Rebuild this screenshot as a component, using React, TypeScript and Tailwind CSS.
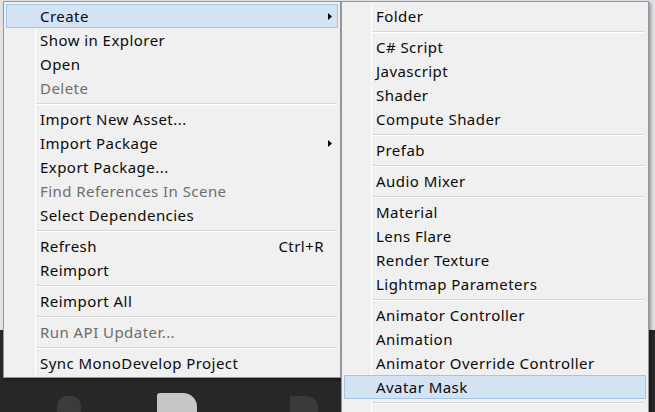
import React from 'react';

type Entry =
  | { label: string; disabled?: boolean; arrow?: boolean; shortcut?: string; active?: boolean }
  | 'sep';

const mainItems: Entry[] = [
  { label: 'Create', arrow: true, active: true },
  { label: 'Show in Explorer' },
  { label: 'Open' },
  { label: 'Delete', disabled: true },
  'sep',
  { label: 'Import New Asset...' },
  { label: 'Import Package', arrow: true },
  { label: 'Export Package...' },
  { label: 'Find References In Scene', disabled: true },
  { label: 'Select Dependencies' },
  'sep',
  { label: 'Refresh', shortcut: 'Ctrl+R' },
  { label: 'Reimport' },
  'sep',
  { label: 'Reimport All' },
  'sep',
  { label: 'Run API Updater...', disabled: true },
  'sep',
  { label: 'Sync MonoDevelop Project' },
];

const createItems: Entry[] = [
  { label: 'Folder' },
  'sep',
  { label: 'C# Script' },
  { label: 'Javascript' },
  { label: 'Shader' },
  { label: 'Compute Shader' },
  'sep',
  { label: 'Prefab' },
  'sep',
  { label: 'Audio Mixer' },
  'sep',
  { label: 'Material' },
  { label: 'Lens Flare' },
  { label: 'Render Texture' },
  { label: 'Lightmap Parameters' },
  'sep',
  { label: 'Animator Controller' },
  { label: 'Animation' },
  { label: 'Animator Override Controller' },
  { label: 'Avatar Mask', active: true },
  'sep',
];

interface MenuProps {
  items: Entry[];
  className: string;
  gutter: string;
  textPad: string;
  sepPad: string;
  tail?: boolean;
}

const Menu: React.FC<MenuProps> = ({ items, className, gutter, textPad, sepPad, tail }) => (
  <div
    className={`absolute border border-[#979797] bg-[#f0f0f0] p-[2px] shadow-[2px_2px_3px_rgba(0,0,0,0.35)] ${className}`}
  >
    <div className={`absolute top-[2px] bottom-[2px] w-px bg-[#e2e3e3] border-r border-white ${gutter}`} />
    {items.map((it, i) =>
      it === 'sep' ? (
        <div key={i} className={`h-[7px] flex flex-col justify-center ${sepPad}`}>
          <div className="h-px bg-[#d7d7d7]" />
          <div className="h-px bg-white" />
        </div>
      ) : (
        <div
          key={i}
          className={`relative h-6 flex items-center pr-[13px] border ${textPad} ${
            it.active ? 'bg-[#d3e3f4] border-[#a5c4e4]' : 'border-transparent'
          } ${it.disabled ? 'text-[#6d6d6d]' : 'text-[#0a0a0a]'}`}
        >
          <span className="flex-1 whitespace-nowrap">{it.label}</span>
          {it.shortcut && <span className="whitespace-nowrap">{it.shortcut}</span>}
          {it.arrow && (
            <svg width="4" height="7" viewBox="0 0 4 7" className="mr-[-8px]">
              <path d="M0 0 L4 3.5 L0 7 Z" fill="#000" />
            </svg>
          )}
        </div>
      )
    )}
    {tail && <div className="h-12" />}
  </div>
);

export default function App() {
  return (
    <div
      className="relative w-[655px] h-[412px] overflow-hidden flex flex-col text-[15px] leading-none tracking-[0.45px]"
      style={{ fontFamily: '"Noto Sans", "Open Sans", sans-serif' }}
    >
      {/* editor behind the menus: light panel above, dark scene view below */}
      <div className="h-[330px] shrink-0 bg-[#dfe2e7]" />
      <div className="flex-1 bg-[#272727] flex items-end pl-[57px]">
        <div className="w-6 h-4 rounded-t-[10px] bg-[#3b3b3b]" />
        <div className="ml-[76px] w-10 h-[19px] rounded-tr-[14px] rounded-tl-[3px] bg-[#c6c6c6]" />
        <div className="ml-[93px] w-7 h-4 rounded-tr-[12px] bg-[#3a3a3a]" />
      </div>

      <Menu
        items={mainItems}
        className="left-[3px] top-px w-[338px]"
        gutter="left-[31px]"
        textPad="pl-[33px]"
        sepPad="pl-[30px] pr-px"
      />
      <Menu
        items={createItems}
        className="left-[341px] top-px w-[308px]"
        gutter="left-[29px]"
        textPad="pl-[31px]"
        sepPad="pl-[28px] pr-px"
        tail
      />
    </div>
  );
}
